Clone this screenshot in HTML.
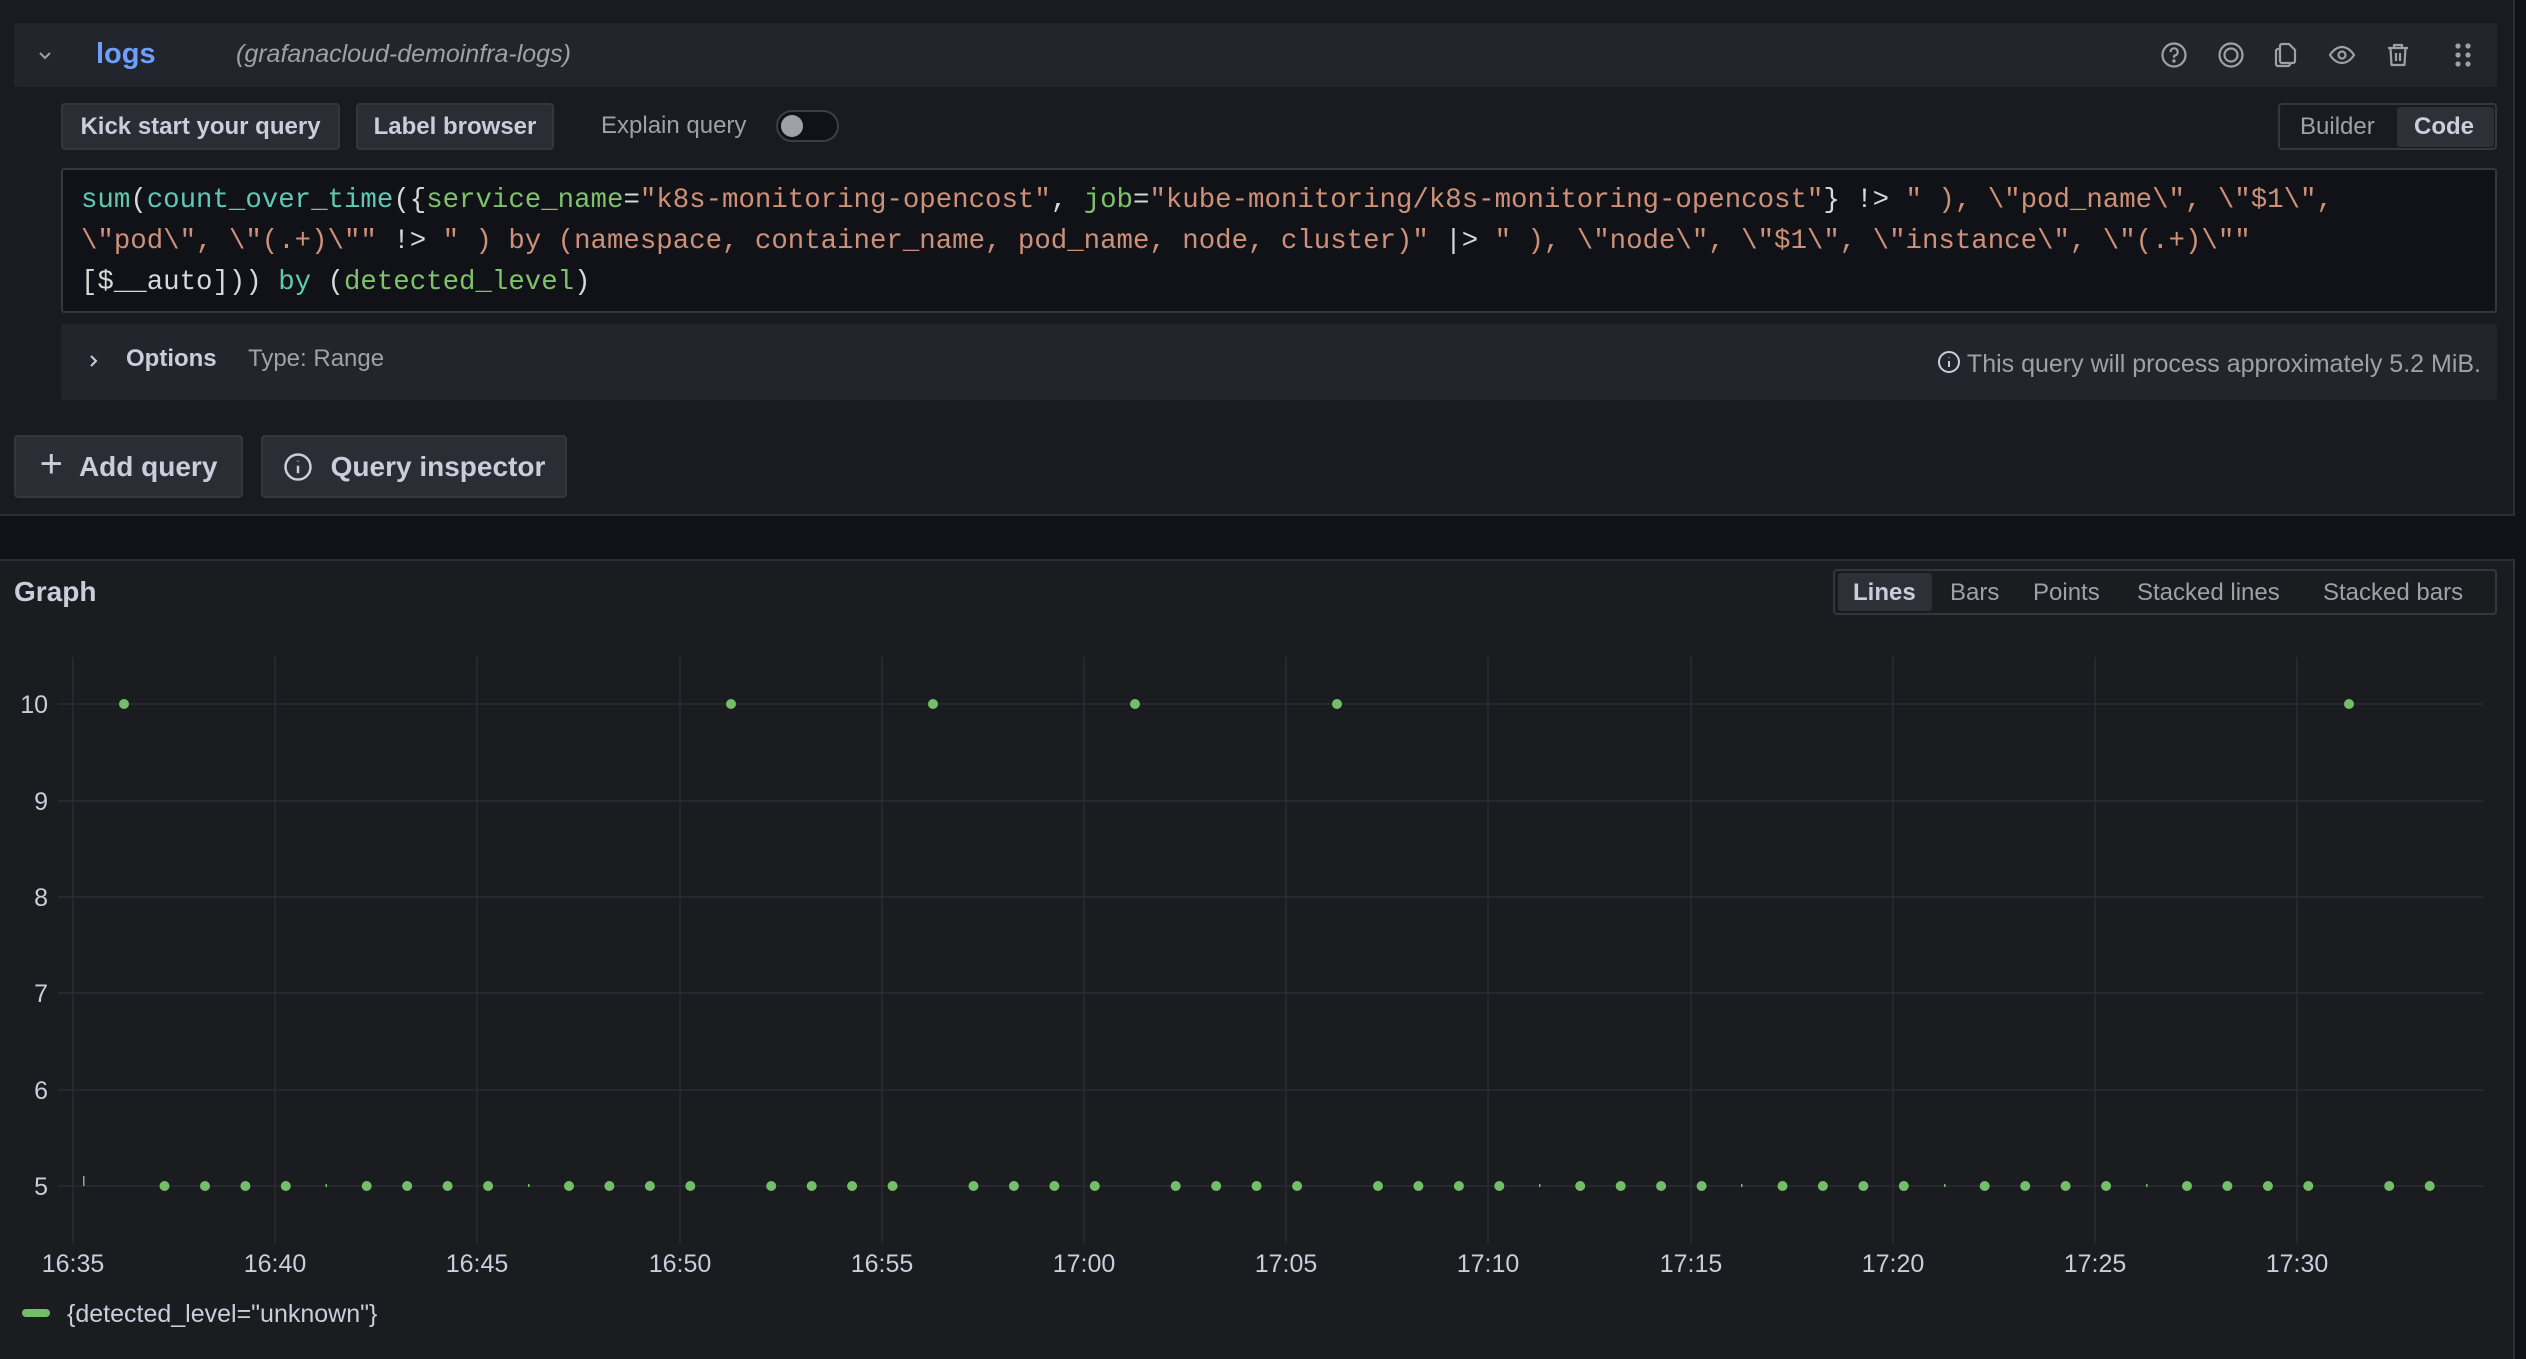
<!DOCTYPE html>
<html><head><meta charset="utf-8">
<style>
*{box-sizing:border-box;margin:0;padding:0}
body{width:2526px;height:1346px;background:#111217;font-family:"Liberation Sans",sans-serif;color:#ccccdc;position:relative;overflow:hidden}
.a{position:absolute}
.btn{position:absolute;background:#2a2d33;border:2px solid #34373d;border-radius:4px;color:#ccccdc;font-size:24px;display:flex;align-items:center;justify-content:center;font-weight:bold}
.code{font-family:"Liberation Mono",monospace;font-size:27.4px;white-space:pre;color:#d8d9da;position:absolute;left:81px;line-height:41px}
.t{color:#5fcab4}.g{color:#7ec26b}.o{color:#ce9178}
.ic{position:absolute;top:41px}
</style></head><body>
<div class="a" style="left:0;top:0;width:2515px;height:516px;background:#181b1f;border-right:2px solid #2c2f35;border-bottom:2px solid #2c2f35"></div>
<div class="a" style="left:14px;top:23px;width:2483px;height:64px;background:#22252b;border-radius:3px"></div>
<svg class="a" style="left:37px;top:49px" width="16" height="14" viewBox="0 0 16 14"><path d="M3 4l5 5 5-5" fill="none" stroke="#9fa1a8" stroke-width="2"/></svg>
<div class="a" style="left:96px;top:38px;font-size:29px;color:#6e9fff;font-weight:bold">logs</div>
<div class="a" style="left:236px;top:40px;font-size:25px;color:#9fa1a8;font-style:italic">(grafanacloud-demoinfra-logs)</div>
<svg class="ic" style="left:2160px" width="28" height="28" viewBox="0 0 28 28" fill="none" stroke="#9fa1a8" stroke-width="2.2"><circle cx="14" cy="14" r="11.5"/><path d="M10.5 11a3.6 3.6 0 1 1 4.5 3.4c-.7.3-1 .8-1 1.6v.8"/><circle cx="14" cy="20" r=".6" fill="#9fa1a8"/></svg>
<svg class="ic" style="left:2217px" width="28" height="28" viewBox="0 0 28 28" fill="none" stroke="#9fa1a8" stroke-width="2.2"><circle cx="14" cy="14" r="11.5"/><circle cx="14" cy="14" r="6.5"/></svg>
<svg class="ic" style="left:2272px" width="28" height="28" viewBox="0 0 28 28" fill="none" stroke="#9fa1a8" stroke-width="2.2" stroke-linejoin="round"><path d="M10 3h7l6 6v11a2 2 0 0 1-2 2H10a2 2 0 0 1-2-2V5a2 2 0 0 1 2-2z"/><path d="M8 8H6a2 2 0 0 0-2 2v13a2 2 0 0 0 2 2h10a2 2 0 0 0 2-2v-1"/></svg>
<svg class="ic" style="left:2328px" width="28" height="28" viewBox="0 0 28 28" fill="none" stroke="#9fa1a8" stroke-width="2.2"><path d="M2 14s4.5-8 12-8 12 8 12 8-4.5 8-12 8S2 14 2 14z"/><circle cx="14" cy="14" r="3.5"/></svg>
<svg class="ic" style="left:2384px" width="28" height="28" viewBox="0 0 28 28" fill="none" stroke="#9fa1a8" stroke-width="2.2" stroke-linejoin="round"><path d="M4 7h20M10 7V4h8v3M6.5 7l1 17h13l1-17M12 12v8M16 12v8"/></svg>
<svg class="ic" style="left:2452px" width="22" height="28" viewBox="0 0 22 28" fill="#9fa1a8"><circle cx="6" cy="5" r="2.6"/><circle cx="16" cy="5" r="2.6"/><circle cx="6" cy="14" r="2.6"/><circle cx="16" cy="14" r="2.6"/><circle cx="6" cy="23" r="2.6"/><circle cx="16" cy="23" r="2.6"/></svg>

<div class="btn" style="left:61px;top:103px;width:279px;height:47px">Kick start your query</div>
<div class="btn" style="left:356px;top:103px;width:198px;height:47px">Label browser</div>
<div class="a" style="left:601px;top:112px;font-size:24px;color:#9fa1a8">Explain query</div>
<div class="a" style="left:776px;top:110px;width:63px;height:32px;border-radius:16px;background:#111217;border:2px solid #3b3e45"></div>
<div class="a" style="left:781px;top:115px;width:22px;height:22px;border-radius:11px;background:#9fa1a8"></div>
<div class="a" style="left:2278px;top:103px;width:219px;height:47px;border:2px solid #34373d;border-radius:4px"></div>
<div class="a" style="left:2300px;top:113px;font-size:24px;color:#9fa1a8">Builder</div>
<div class="a" style="left:2397px;top:107px;width:97px;height:40px;background:#2d3036;border-radius:3px"></div>
<div class="a" style="left:2414px;top:113px;font-size:24px;color:#ccccdc;font-weight:bold">Code</div>

<div class="a" style="left:61px;top:168px;width:2436px;height:145px;background:#111217;border:2px solid #34373d;border-radius:3px"></div>
<div class="code" style="top:180px"><span class="t">sum</span>(<span class="t">count_over_time</span>({<span class="g">service_name</span>=<span class="o">"k8s-monitoring-opencost"</span>, <span class="g">job</span>=<span class="o">"kube-monitoring/k8s-monitoring-opencost"</span>} !&gt; <span class="o">" ), \"pod_name\", \"$1\",</span></div>
<div class="code" style="top:221px"><span class="o">\"pod\", \"(.+)\""</span> !&gt; <span class="o">" ) by (namespace, container_name, pod_name, node, cluster)"</span> |&gt; <span class="o">" ), \"node\", \"$1\", \"instance\", \"(.+)\""</span></div>
<div class="code" style="top:262px">[$__auto])) <span class="t">by</span> (<span class="g">detected_level</span>)</div>

<div class="a" style="left:61px;top:324px;width:2436px;height:76px;background:#22252b;border-radius:3px"></div>
<svg class="a" style="left:86px;top:352px" width="14" height="18" viewBox="0 0 14 18"><path d="M5 4l5 5-5 5" fill="none" stroke="#ccccdc" stroke-width="2"/></svg>
<div class="a" style="left:126px;top:345px;font-size:24px;font-weight:bold;color:#ccccdc">Options</div>
<div class="a" style="left:248px;top:345px;font-size:24px;color:#9fa1a8">Type: Range</div>
<div class="a" style="right:45px;top:350px;font-size:25px;color:#9fa1a8;display:flex;align-items:center"><svg width="24" height="24" viewBox="0 0 24 24" fill="none" stroke="#ccccdc" stroke-width="2" style="margin-right:6px;margin-top:-6px"><circle cx="12" cy="12" r="10"/><path d="M12 11v6M12 7v.5"/></svg>This query will process approximately 5.2 MiB.</div>

<div class="btn" style="left:14px;top:435px;width:229px;height:63px;font-size:28px"><span style="font-weight:normal;font-size:40px;margin-right:16px;margin-top:-4px">+</span>Add query</div>
<div class="btn" style="left:261px;top:435px;width:306px;height:63px;font-size:28px"><svg width="30" height="30" viewBox="0 0 24 24" fill="none" stroke="#ccccdc" stroke-width="2" style="margin-right:18px"><circle cx="12" cy="12" r="10"/><path d="M12 11v6M12 7v.5"/></svg>Query inspector</div>

<div class="a" style="left:0;top:559px;width:2515px;height:800px;background:#1b1c20;border-top:2px solid #2c2f35;border-right:2px solid #2c2f35"></div>
<div class="a" style="left:14px;top:576px;font-size:28px;font-weight:bold;color:#ccccdc">Graph</div>
<div class="a" style="left:1833px;top:569px;width:664px;height:46px;border:2px solid #34373d;border-radius:4px"></div>
<div class="a" style="left:1838px;top:573px;width:94px;height:38px;background:#2d3036;border-radius:3px"></div>
<div class="a" style="left:1853px;top:579px;font-size:24px;font-weight:bold;color:#ccccdc">Lines</div>
<div class="a" style="left:1950px;top:579px;font-size:24px;color:#9fa1a8">Bars</div>
<div class="a" style="left:2033px;top:579px;font-size:24px;color:#9fa1a8">Points</div>
<div class="a" style="left:2137px;top:579px;font-size:24px;color:#9fa1a8">Stacked lines</div>
<div class="a" style="left:2323px;top:579px;font-size:24px;color:#9fa1a8">Stacked bars</div>

<svg class="a" style="left:0;top:0" width="2526" height="1346">
<g stroke="#2b2d32" stroke-width="1.5">
<line x1="73" y1="657" x2="73" y2="1243"/><line x1="275" y1="657" x2="275" y2="1243"/><line x1="477" y1="657" x2="477" y2="1243"/><line x1="680" y1="657" x2="680" y2="1243"/><line x1="882" y1="657" x2="882" y2="1243"/><line x1="1084" y1="657" x2="1084" y2="1243"/><line x1="1286" y1="657" x2="1286" y2="1243"/><line x1="1488" y1="657" x2="1488" y2="1243"/><line x1="1691" y1="657" x2="1691" y2="1243"/><line x1="1893" y1="657" x2="1893" y2="1243"/><line x1="2095" y1="657" x2="2095" y2="1243"/><line x1="2297" y1="657" x2="2297" y2="1243"/>
<line x1="58" y1="704" x2="2483" y2="704"/><line x1="58" y1="801" x2="2483" y2="801"/><line x1="58" y1="897" x2="2483" y2="897"/><line x1="58" y1="993" x2="2483" y2="993"/><line x1="58" y1="1090" x2="2483" y2="1090"/><line x1="58" y1="1186" x2="2483" y2="1186"/>
</g>
<g font-family="Liberation Sans" font-size="25" fill="#ccccdc" text-anchor="end">
<text x="48" y="713">10</text><text x="48" y="810">9</text><text x="48" y="906">8</text><text x="48" y="1002">7</text><text x="48" y="1099">6</text><text x="48" y="1195">5</text>
</g>
<g font-family="Liberation Sans" font-size="25" fill="#ccccdc" text-anchor="middle">
<text x="73" y="1272">16:35</text><text x="275" y="1272">16:40</text><text x="477" y="1272">16:45</text><text x="680" y="1272">16:50</text><text x="882" y="1272">16:55</text><text x="1084" y="1272">17:00</text><text x="1286" y="1272">17:05</text><text x="1488" y="1272">17:10</text><text x="1691" y="1272">17:15</text><text x="1893" y="1272">17:20</text><text x="2095" y="1272">17:25</text><text x="2297" y="1272">17:30</text>
</g>
<g fill="#73bf69">
<circle cx="124" cy="704" r="5"/><circle cx="731" cy="704" r="5"/><circle cx="933" cy="704" r="5"/><circle cx="1135" cy="704" r="5"/><circle cx="1337" cy="704" r="5"/><circle cx="2349" cy="704" r="5"/>
<circle cx="164.5" cy="1186" r="5"/><circle cx="205" cy="1186" r="5"/><circle cx="245.4" cy="1186" r="5"/><circle cx="285.8" cy="1186" r="5"/><circle cx="366.7" cy="1186" r="5"/><circle cx="407.2" cy="1186" r="5"/><circle cx="447.6" cy="1186" r="5"/><circle cx="488.1" cy="1186" r="5"/><circle cx="569" cy="1186" r="5"/><circle cx="609.4" cy="1186" r="5"/><circle cx="649.9" cy="1186" r="5"/><circle cx="690.3" cy="1186" r="5"/><circle cx="771.2" cy="1186" r="5"/><circle cx="811.7" cy="1186" r="5"/><circle cx="852.1" cy="1186" r="5"/><circle cx="892.6" cy="1186" r="5"/><circle cx="973.5" cy="1186" r="5"/><circle cx="1013.9" cy="1186" r="5"/><circle cx="1054.4" cy="1186" r="5"/><circle cx="1094.8" cy="1186" r="5"/><circle cx="1175.7" cy="1186" r="5"/><circle cx="1216.2" cy="1186" r="5"/><circle cx="1256.6" cy="1186" r="5"/><circle cx="1297.1" cy="1186" r="5"/><circle cx="1378" cy="1186" r="5"/><circle cx="1418.4" cy="1186" r="5"/><circle cx="1458.9" cy="1186" r="5"/><circle cx="1499.3" cy="1186" r="5"/><circle cx="1580.2" cy="1186" r="5"/><circle cx="1620.7" cy="1186" r="5"/><circle cx="1661.1" cy="1186" r="5"/><circle cx="1701.6" cy="1186" r="5"/><circle cx="1782.5" cy="1186" r="5"/><circle cx="1822.9" cy="1186" r="5"/><circle cx="1863.4" cy="1186" r="5"/><circle cx="1903.8" cy="1186" r="5"/><circle cx="1984.7" cy="1186" r="5"/><circle cx="2025.2" cy="1186" r="5"/><circle cx="2065.6" cy="1186" r="5"/><circle cx="2106.1" cy="1186" r="5"/><circle cx="2187" cy="1186" r="5"/><circle cx="2227.4" cy="1186" r="5"/><circle cx="2267.9" cy="1186" r="5"/><circle cx="2308.3" cy="1186" r="5"/><circle cx="2389.2" cy="1186" r="5"/><circle cx="2429.7" cy="1186" r="5"/>
<rect x="83" y="1176" width="1.5" height="10"/><rect x="325.5" y="1184" width="1.5" height="3"/><rect x="528" y="1184" width="1.5" height="3"/><rect x="1539" y="1184" width="1.5" height="3"/><rect x="1741" y="1184" width="1.5" height="3"/><rect x="1944" y="1184" width="1.5" height="3"/><rect x="2146" y="1184" width="1.5" height="3"/>
<rect x="22" y="1309" width="28" height="8" rx="4"/>
</g>
<text x="67" y="1322" font-family="Liberation Sans" font-size="25" fill="#ccccdc">{detected_level="unknown"}</text>
</svg>
</body></html>
